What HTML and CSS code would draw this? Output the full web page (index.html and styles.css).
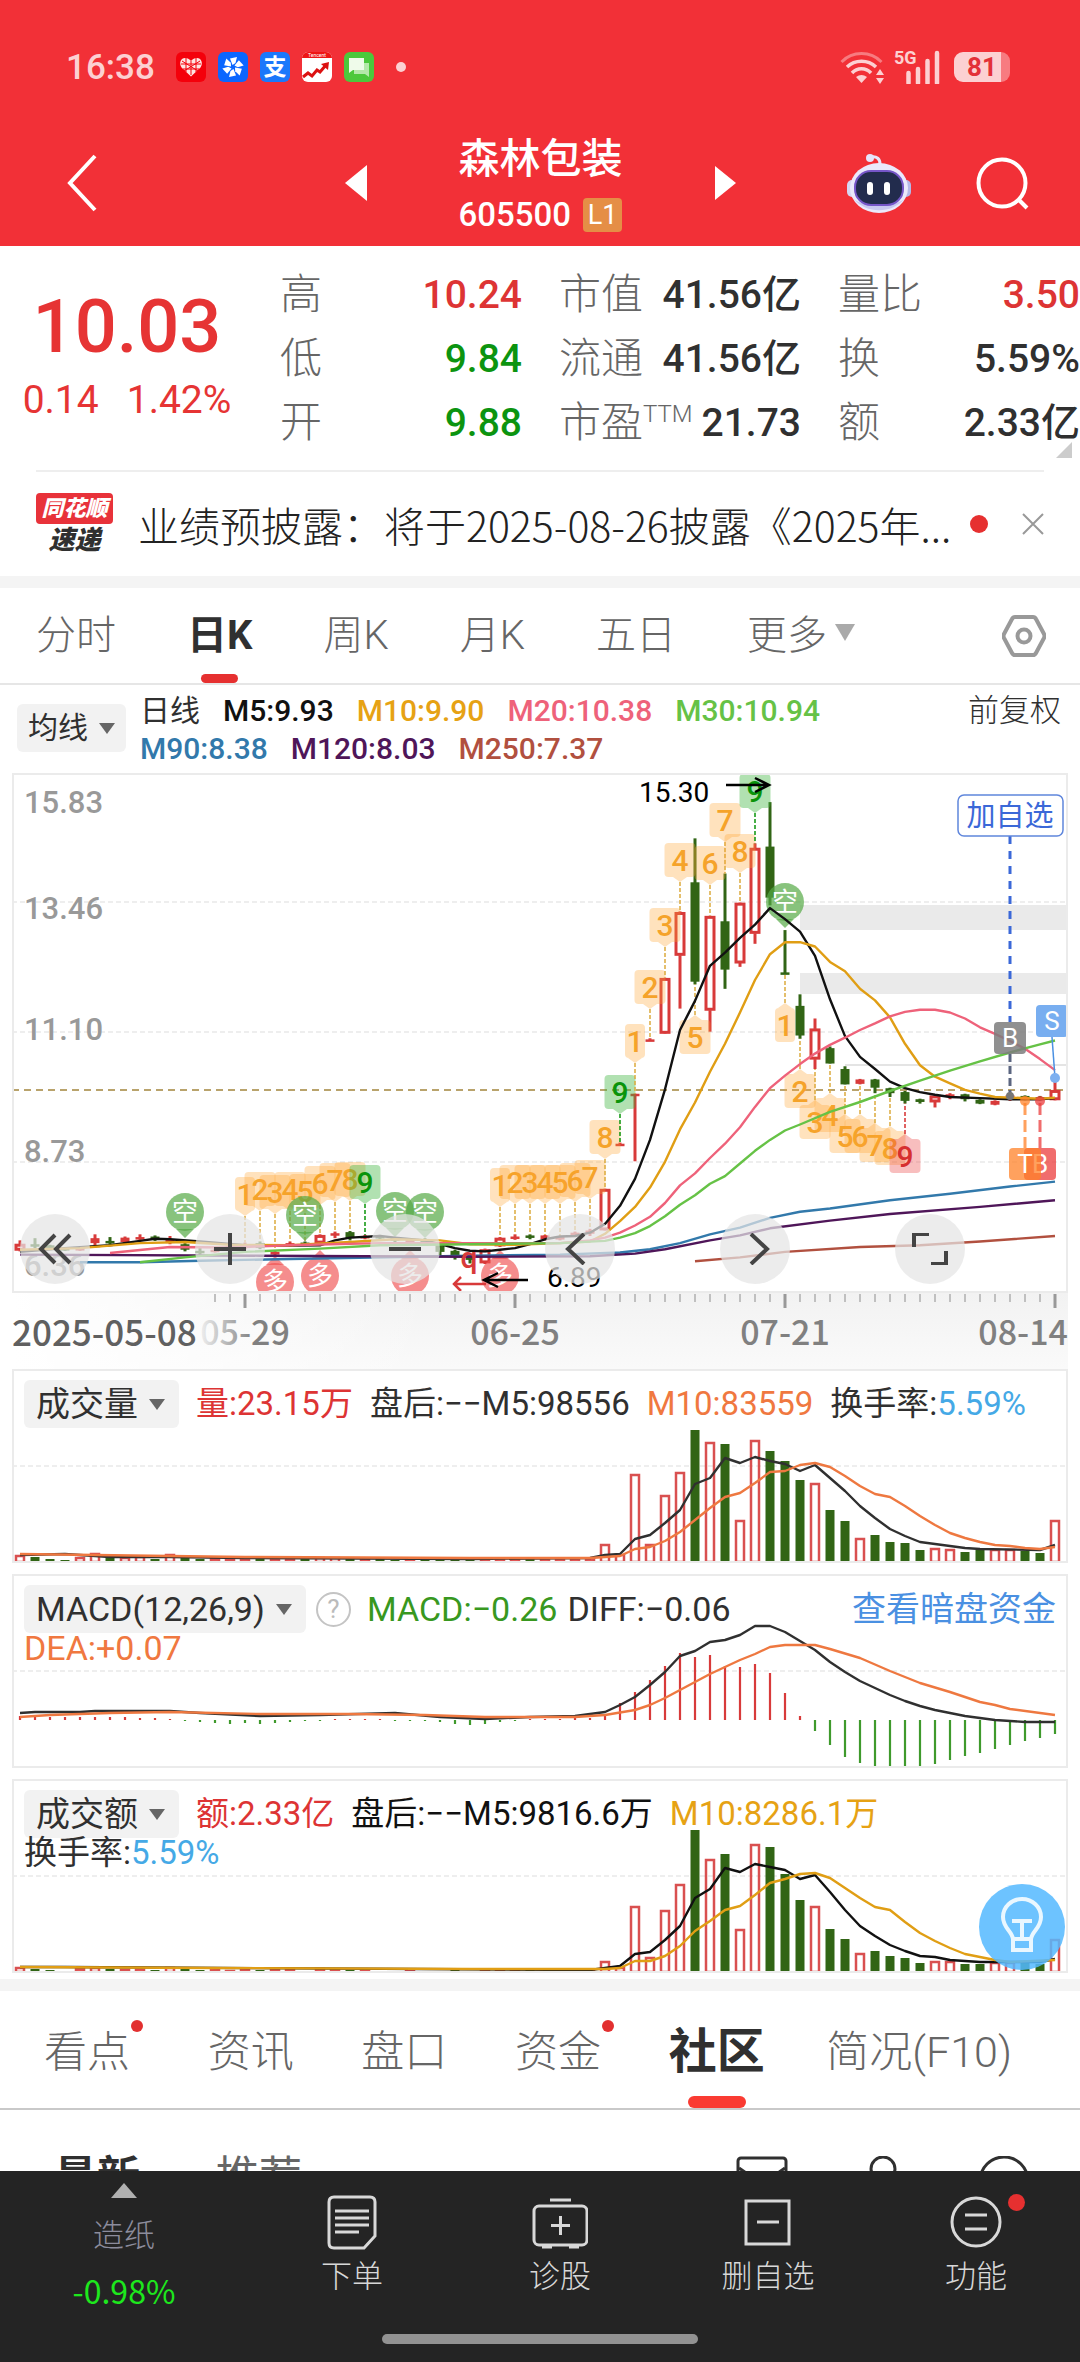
FILE: index.html
```html
<!DOCTYPE html>
<html lang="zh-CN">
<head>
    <meta charset="UTF-8">
    <meta name="viewport" content="width=device-width, initial-scale=1.0">
    <title>森林包装 605500</title>
    <link rel="stylesheet" href="styles.css">
</head>
<body>
    <header class="header">
        <div class="status-bar">
            <span class="clock">16:38</span>
            <div class="status-apps">
                <svg width="30" height="30" viewBox="0 0 30 30"><rect width="30" height="30" rx="6" fill="#f4000b"/><path d="M15 24.500L5.500 15.500C2.500 11 5 6 9 6c3 0 5 1.500 6 3 1-1.500 3-3 6-3 4 0 6.500 5 3.500 9.500z" fill="#fde4e2"/><path d="M5 12h20M7 17h16M10 6v14M15 9v14M20 6v14M6 9l16 10M24 9L8 19" stroke="#f4000b" stroke-width="1"/></svg>
                <svg width="30" height="30" viewBox="0 0 30 30"><rect width="30" height="30" rx="6" fill="#0a66ff"/><g fill="#fff"><path id="blade" d="M14.500 13L12 6.500 19 5l-1.500 6z"/><use href="#blade" transform="rotate(60 15 15)"/><use href="#blade" transform="rotate(120 15 15)"/><use href="#blade" transform="rotate(180 15 15)"/><use href="#blade" transform="rotate(240 15 15)"/><use href="#blade" transform="rotate(300 15 15)"/></g></svg>
                <svg width="30" height="30" viewBox="0 0 30 30"><rect width="30" height="30" rx="6" fill="#1b78fb"/><text x="15" y="23" class="app-glyph">支</text></svg>
                <svg width="30" height="30" viewBox="0 0 30 30"><rect width="30" height="30" rx="6" fill="#fff"/><path d="M0 6a6 6 0 0 1 6-6h18a6 6 0 0 1 6 6z" fill="#ee1515"/><text x="15" y="5" class="app-brand">Tencent</text><path d="M1 25l5-4 4 3 5-6 3 2 6-7" fill="none" stroke="#dc1111" stroke-width="3"/><path d="M19 12l8-2-1 8z" fill="#dc1111"/></svg>
                <svg width="30" height="30" viewBox="0 0 30 30"><rect width="30" height="30" rx="6" fill="#4cc83c"/><path d="M10 11h15v14l-4-3H10z" fill="#b4e8aa"/><path d="M5 6h15v12H9l-4 3z" fill="#effbea"/></svg>
            </div>
            <span class="status-dot"></span>
            <div class="status-right">
                <svg width="44" height="34" viewBox="0 0 44 34" fill="none"><path d="M1.500 12a28 28 0 0 1 40 0" stroke="#f77b80" stroke-width="3"/><path d="M7 17a21 21 0 0 1 29 0M12 23a13 13 0 0 1 19 0" stroke="#fcd0d2" stroke-width="3.500"/><path d="M16 27q5.500-4 11 0l-5.500 6z" fill="#fcd0d2"/><path d="M36 25l4-6 4 6zM36 28h8l-4 6z" fill="#fcd0d2"/></svg>
                <div class="signal">
                    <span>5G</span>
                    <svg width="42" height="34" viewBox="0 0 42 34"><path d="M10.500 33V23M20 33V19M29.500 33V11M39 33V3" stroke="#fcd0d2" stroke-width="4.500" stroke-linecap="round"/></svg>
                </div>
                <span class="battery">81</span>
            </div>
        </div>
        <nav class="nav-bar">
            <button class="icon-btn back" aria-label="返回"><svg width="30" height="58" viewBox="0 0 30 58"><path d="M28 2L3 29l25 27" fill="none" stroke="#fff" stroke-width="4"/></svg></button>
            <div class="stock-switch">
                <button class="icon-btn" aria-label="上一只"><svg width="22" height="36" viewBox="0 0 22 36"><path d="M22 0v36L0 18z" fill="#fff"/></svg></button>
                <div class="stock-name">
                    <h1>森林包装</h1>
                    <p>605500 <span class="level">L1</span></p>
                </div>
                <button class="icon-btn" aria-label="下一只"><svg width="22" height="36" viewBox="0 0 22 36"><path d="M0 1v34l21-17z" fill="#fff"/></svg></button>
            </div>
            <div class="nav-tools">
                <button class="icon-btn" aria-label="智能助手">
                    <svg width="64" height="60" viewBox="0 0 64 60">
                        <path d="M24 4c6-1 9 2 9 7" fill="none" stroke="#e8e6fa" stroke-width="3"/><circle cx="23" cy="5" r="4" fill="#e6e4fb"/>
                        <rect x="0" y="27" width="10" height="17" rx="5" fill="#d5d6f3"/><rect x="54" y="27" width="10" height="17" rx="5" fill="#b5b9e8"/>
                        <ellipse cx="32" cy="35" rx="29" ry="25" fill="#ebe9fb"/><path d="M7 46c12 15 38 15 50 0-8 8-42 8-50 0z" fill="#c9c8f0"/>
                        <rect x="8" y="18" width="48" height="34" rx="16" fill="#222c4d" stroke="#7656c8" stroke-width="2"/>
                        <rect x="20" y="29" width="6" height="13" rx="3" fill="#fff"/><rect x="37" y="29" width="6" height="13" rx="3" fill="#fff"/>
                    </svg>
                </button>
                <button class="icon-btn" aria-label="搜索"><svg width="54" height="54" viewBox="0 0 54 54" fill="none" stroke="#fff" stroke-width="4"><circle cx="26" cy="27" r="23.500"/><path d="M42 43l9 9"/></svg></button>
            </div>
        </nav>
    </header>

    <main>
        <section class="quote">
            <div class="price">
                <strong>10.03</strong>
                <p><span>0.14</span><span>1.42%</span></p>
            </div>
            <dl class="stats">
                <div><dt>高</dt><dd class="up">10.24</dd></div>
                <div><dt>市值</dt><dd>41.56亿</dd></div>
                <div><dt>量比</dt><dd class="up">3.50</dd></div>
                <div><dt>低</dt><dd class="down">9.84</dd></div>
                <div><dt>流通</dt><dd>41.56亿</dd></div>
                <div><dt>换</dt><dd>5.59%</dd></div>
                <div><dt>开</dt><dd class="down">9.88</dd></div>
                <div><dt>市盈<sup>TTM</sup></dt><dd>21.73</dd></div>
                <div><dt>额</dt><dd>2.33亿</dd></div>
            </dl>
            <span class="corner"></span>
        </section>

        <section class="news">
            <div class="news-logo"><b>同花顺</b><i>速递</i></div>
            <a href="#">业绩预披露：将于2025-08-26披露《2025年...</a>
            <span class="news-dot"></span>
            <button class="icon-btn" aria-label="关闭"><svg width="22" height="22" viewBox="0 0 22 22"><path d="M1 1l20 20M21 1L1 21" stroke="#999" stroke-width="2"/></svg></button>
        </section>

        <nav class="period-tabs">
            <a href="#">分时</a>
            <a href="#" class="active">日K</a>
            <a href="#">周K</a>
            <a href="#">月K</a>
            <a href="#">五日</a>
            <a href="#" class="more">更多</a>
            <button class="icon-btn" aria-label="设置"><svg width="44" height="44" viewBox="0 0 44 44" fill="none" stroke="#999" stroke-width="4"><path d="M13 3h18q2 0 3 2l8 15q1 2 0 4l-8 15q-1 2-3 2H13q-2 0-3-2L2 24q-1-2 0-4l8-15q1-2 3-2z"/><circle cx="22" cy="22" r="6.500"/></svg></button>
        </nav>

        <div class="ma-legend">
            <label class="picker"><select aria-label="均线"><option>均线</option></select></label>
            <div class="ma-values">
                <p><span>日线</span><span class="m5">M5:9.93</span><span class="m10">M10:9.90</span><span class="m20">M20:10.38</span><span class="m30">M30:10.94</span></p>
                <p><span class="m90">M90:8.38</span><span class="m120">M120:8.03</span><span class="m250">M250:7.37</span></p>
            </div>
            <a href="#" class="adjust">前复权</a>
        </div>

        <div class="charts">
            <div class="panel">
                <svg id="kline" viewBox="0 0 1056 520"></svg>
                <div class="chart-tools">
                    <button aria-label="最早"><svg width="36" height="32" viewBox="0 0 36 32"><path d="M18 2L4 16l14 14M33 2L19 16l14 14"/></svg></button>
                    <button aria-label="放大"><svg width="36" height="32" viewBox="0 0 36 32"><path d="M18 0v32M2 16h32"/></svg></button>
                    <button aria-label="缩小"><svg width="36" height="32" viewBox="0 0 36 32"><path d="M2 16h32"/></svg></button>
                    <button aria-label="左移"><svg width="36" height="32" viewBox="0 0 36 32"><path d="M22 1L6 16l16 15"/></svg></button>
                    <button aria-label="右移"><svg width="36" height="32" viewBox="0 0 36 32"><path d="M14 1l16 15-16 15"/></svg></button>
                    <button aria-label="全屏"><svg width="36" height="32" viewBox="0 0 36 32"><path d="M17 1H2v13M19 31h15V18"/></svg></button>
                </div>
            </div>
            <svg id="axis" class="axis" viewBox="0 0 1056 76">
                <defs><linearGradient id="fade"><stop offset="0" stop-color="#808080" stop-opacity="0.1"/><stop offset="0.6" stop-color="#808080"/></linearGradient></defs>
            </svg>

            <div class="panel">
                <div class="legend">
                    <label class="picker"><select aria-label="副图一"><option>成交量</option></select></label>
                    <span class="up">量:23.15万</span>
                    <span>盘后:−−M5:98556</span>
                    <span class="avg">M10:83559</span>
                    <span>换手率:<em>5.59%</em></span>
                </div>
                <svg id="volume" viewBox="0 0 1056 194"></svg>
            </div>

            <div class="panel">
                <div class="legend tight">
                    <label class="picker"><select aria-label="副图二"><option>MACD(12,26,9)</option></select></label>
                    <button class="help" aria-label="说明">?</button>
                    <span class="macd">MACD:−0.26</span>
                    <span>DIFF:−0.06</span>
                    <a href="#">查看暗盘资金</a>
                    <span class="avg row">DEA:+0.07</span>
                </div>
                <svg id="macd" viewBox="0 0 1056 194"></svg>
            </div>

            <div class="panel">
                <div class="legend">
                    <label class="picker"><select aria-label="副图三"><option>成交额</option></select></label>
                    <span class="up">额:2.33亿</span>
                    <span class="m5">盘后:−−M5:9816.6万</span>
                    <span class="m10">M10:8286.1万</span>
                    <span class="row">换手率:<em>5.59%</em></span>
                </div>
                <svg id="amount" viewBox="0 0 1056 194"></svg>
                <button class="bulb" aria-label="提示"><svg width="44" height="60" viewBox="0 0 44 60" fill="none" stroke="#eaf7ff" stroke-width="4"><path d="M13 42C12 34 3 31 3 20a19 18 0 0 1 38 0c0 11-9 14-10 22z"/><path d="M12 24h20M22 24v18M13 42v11h18V42"/></svg></button>
            </div>
        </div>

        <nav class="section-tabs">
            <a href="#" class="new">看点</a>
            <a href="#">资讯</a>
            <a href="#">盘口</a>
            <a href="#" class="new">资金</a>
            <a href="#" class="active">社区</a>
            <a href="#">简况(F10)</a>
        </nav>

        <div class="feed-head">
            <a href="#" class="active">最新</a>
            <a href="#">推荐</a>
            <div class="feed-tools">
                <svg width="52" height="44" viewBox="0 0 52 44"><rect x="2" y="2" width="48" height="38" rx="3"/><path d="M3 12l23 16 23-16"/></svg>
                <svg width="52" height="52" viewBox="0 0 52 52"><circle cx="26" cy="13" r="12"/><path d="M4 50c2-28 42-28 44 0"/></svg>
                <svg width="52" height="52" viewBox="0 0 52 52"><circle cx="26" cy="25" r="24"/></svg>
            </div>
        </div>
    </main>

    <footer class="bottom-bar">
        <a href="#" class="sector"><i></i><span>造纸</span><b>-0.98%</b></a>
        <a href="#"><svg width="56" height="56" viewBox="0 0 56 56"><path d="M10 3h36q5 0 5 5v34L40 54H10q-5 0-5-5V8q0-5 5-5z"/><path d="M11 17h34M11 24h34M11 31h34M11 38h24"/></svg>下单</a>
        <a href="#"><svg width="56" height="56" viewBox="0 0 56 56"><rect x="2" y="12" width="53" height="39" rx="5"/><path d="M18 6h21M28.500 22v19M19 31.500h19M10 53h10M37 53h10"/></svg>诊股</a>
        <a href="#"><svg width="56" height="56" viewBox="0 0 56 56"><rect x="6" y="7" width="43" height="43"/><path d="M17 28h22"/></svg>删自选</a>
        <a href="#" class="new"><svg width="56" height="56" viewBox="0 0 56 56"><circle cx="28" cy="28" r="24"/><path d="M17 21h22M17 35h22"/></svg>功能</a>
        <span class="home-pill"></span>
    </footer>
    <script src="chart.js"></script>
</body>
</html>
```
FILE: styles.css
```css
* {
    box-sizing: border-box;
}
body {
    margin: 0;
    min-height: 100vh;
    background: #fff;
    color: #303030;
    font-family: Roboto, "Noto Sans CJK SC", sans-serif;
    overflow-x: hidden;
    padding-bottom: 140px;
}
h1, p, dl, dd {
    margin: 0;
}
a {
    color: inherit;
    text-decoration: none;
}
button, select {
    font: inherit;
    color: inherit;
    border: none;
    padding: 0;
}
svg {
    display: block;
}
.icon-btn {
    background: none;
    line-height: 0;
    cursor: pointer;
}
.up {
    color: #dd3434;
}
.down {
    color: #0c9410;
}

/* Header */
.header {
    background: #f23037;
    color: #fff;
}
.status-bar {
    display: flex;
    align-items: center;
    height: 134px;
    padding: 0 70px 0 66px;
    color: #fcd0d2;
}
.clock {
    font-size: 35px;
    font-weight: 500;
}
.status-apps {
    display: flex;
    gap: 12px;
    margin-left: 21px;
}
.app-glyph {
    font-size: 23px;
    font-weight: 700;
    fill: #fff;
    text-anchor: middle;
}
.app-brand {
    font-size: 5px;
    fill: #fff;
    text-anchor: middle;
}
.status-dot {
    width: 10px;
    height: 10px;
    border-radius: 50%;
    background: #fcd0d2;
    margin-left: 22px;
}
.status-right {
    display: flex;
    align-items: center;
    gap: 14px;
    margin-left: auto;
}
.signal {
    position: relative;
}
.signal span {
    position: absolute;
    left: -4px;
    top: -1px;
    font-size: 18px;
    font-weight: 700;
    line-height: 18px;
}
.battery {
    width: 56px;
    height: 30px;
    border-radius: 9px;
    background: linear-gradient(90deg, #fcd0d2 47px, #f77b80 47px);
    color: #e33038;
    font-size: 26px;
    font-weight: 700;
    line-height: 30px;
    text-align: center;
}
.nav-bar {
    display: grid;
    grid-template-columns: 1fr 392px 1fr;
    align-items: center;
    height: 112px;
    padding: 0 50px 14px 67px;
}
.back {
    justify-self: start;
}
.stock-switch {
    display: flex;
    justify-content: space-between;
    align-items: center;
    margin: 0 8px 0 -8px;
}
.stock-name {
    text-align: center;
}
.stock-name h1 {
    font-size: 41px;
    font-weight: 500;
    line-height: 50px;
}
.stock-name p {
    display: flex;
    gap: 12px;
    margin-top: 14px;
    font-size: 33px;
    font-weight: 500;
    line-height: 34px;
}
.level {
    width: 39px;
    background: #e58e46;
    border-radius: 4px;
    font-size: 27px;
    font-weight: 400;
}
.nav-tools {
    display: flex;
    justify-content: flex-end;
    align-items: center;
    gap: 65px;
}

/* Quote */
.quote {
    display: flex;
    position: relative;
    height: 226px;
    padding-top: 17px;
}
.quote::after {
    content: "";
    position: absolute;
    left: 36px;
    right: 36px;
    bottom: 0;
    height: 2px;
    background: #eee;
}
.price {
    width: 254px;
    margin-right: 26px;
    padding-top: 18px;
    text-align: center;
    color: #e63434;
}
.price strong {
    display: block;
    font-size: 74px;
    font-weight: 500;
    line-height: 92px;
}
.price p {
    display: flex;
    justify-content: center;
    gap: 28px;
    font-size: 39px;
    line-height: 54px;
}
.stats {
    flex: 1;
    display: grid;
    grid-template-columns: repeat(3, 1fr);
    column-gap: 37px;
    grid-auto-rows: 64px;
}
.stats div {
    display: flex;
    justify-content: space-between;
    line-height: 64px;
    white-space: nowrap;
}
.stats dt {
    color: #666;
    font-size: 42px;
    font-weight: 300;
}
.stats sup {
    font-size: 24px;
    line-height: 0;
}
.stats dd {
    font-size: 39px;
    font-weight: 500;
}
.corner {
    position: absolute;
    right: 8px;
    bottom: 14px;
    border-left: 16px solid transparent;
    border-bottom: 16px solid #ccc;
}

/* News strip */
.news {
    display: flex;
    align-items: center;
    height: 104px;
    padding: 0 36px;
}
.news-logo {
    width: 77px;
    margin-right: 25px;
    font-style: italic;
    font-weight: 900;
    text-align: center;
}
.news-logo b {
    display: block;
    background: #e8323a;
    border-radius: 4px;
    color: #fff;
    font-size: 22px;
    line-height: 31px;
}
.news-logo i {
    display: block;
    font-size: 26px;
    line-height: 32px;
}
.news a {
    flex: 1;
    font-family: "Noto Sans CJK SC", sans-serif;
    font-size: 41px;
    font-weight: 300;
    line-height: 60px;
    white-space: nowrap;
    color: #222;
}
.news-dot {
    width: 18px;
    height: 18px;
    border-radius: 50%;
    background: #e63030;
    margin-right: 34px;
}

/* Period tabs */
.period-tabs {
    display: flex;
    align-items: center;
    gap: 71px;
    height: 109px;
    padding: 0 34px 0 36px;
    border-top: 12px solid #f4f4f4;
    border-bottom: 2px solid #e6e6e6;
    font-size: 40px;
    font-weight: 300;
    line-height: 95px;
    color: #666;
}
.period-tabs a {
    position: relative;
    white-space: nowrap;
}
.period-tabs .active {
    color: #303030;
    font-weight: 700;
}
.period-tabs .active::after {
    content: "";
    position: absolute;
    left: 14px;
    right: 14px;
    bottom: 0;
    height: 9px;
    border-radius: 5px;
    background: #e63030;
}
.more::after {
    content: "";
    display: inline-block;
    margin-left: 8px;
    vertical-align: 8px;
    border: 10px solid transparent;
    border-top: 17px solid #aaa;
    border-bottom: none;
}
.period-tabs button {
    margin-left: auto;
}

/* Indicator picker */
.picker {
    display: inline-flex;
    align-items: center;
    height: 48px;
    padding: 0 14px 0 12px;
    border-radius: 6px;
    background: #f2f2f2;
    color: #303030;
}
.picker select {
    appearance: none;
    background: none;
    cursor: pointer;
}
.picker::after {
    content: "";
    margin-left: 11px;
    border: 8px solid transparent;
    border-top: 11px solid #666;
    border-bottom: none;
}

/* MA legend */
.ma-legend {
    display: flex;
    height: 88px;
    padding: 7px 19px 0 17px;
    font-size: 30px;
    line-height: 38px;
}
.ma-legend .picker {
    margin-top: 12px;
    padding: 0 11px;
    flex: none;
}
.ma-values {
    flex: 1;
    margin-left: 14px;
    font-weight: 500;
}
.ma-values p {
    display: flex;
    gap: 23px;
    white-space: nowrap;
}
.ma-values p span:first-child {
    font-weight: 400;
}
.ma-values p .m90:first-child {
    font-weight: 500;
}
.adjust {
    font-size: 31px;
    font-weight: 300;
}
.m5 { color: #111; }
.m10 { color: #e6a214; }
.m20 { color: #ee627a; }
.m30 { color: #66c246; }
.m90 { color: #3279ab; }
.m120 { color: #4f1659; }
.m250 { color: #b1503f; }

/* Charts */
.charts {
    padding: 0 12px 6px;
}
.panel {
    position: relative;
    margin-bottom: 11px;
    outline: 2px solid #ebebeb;
    outline-offset: -2px;
}
.panel:first-child, .panel:last-child {
    margin-bottom: 0;
}
.panel > svg, .axis {
    width: 100%;
    height: auto;
}
.axis {
    background: linear-gradient(90deg, #fff, transparent 40%), linear-gradient(#f2f2f2, #fafafa);
}
.grid {
    stroke: #ddd;
    stroke-width: 1;
    stroke-dasharray: 5 3;
}
.now {
    stroke: #b9a36c;
    stroke-width: 2;
    stroke-dasharray: 7 5;
}
.scale {
    font-size: 31px;
    font-weight: 500;
    fill: #999;
}
.date {
    font-size: 34px;
    font-weight: 500;
    fill: #808080;
    font-family: "Noto Sans CJK SC", sans-serif;
}
.date.first {
    font-size: 35px;
    fill: #606060;
}
.date.faded {
    fill: url(#fade);
}
.extreme {
    font-size: 28px;
    fill: #000;
}
.pin {
    font-size: 30px;
    font-weight: 500;
    text-anchor: middle;
}
.flag {
    font-size: 26px;
    fill: #fff;
    text-anchor: middle;
}
.watch {
    font-size: 29px;
    fill: #3b68d8;
    text-anchor: middle;
}
.chart-tools {
    position: absolute;
    left: 8px;
    right: 103px;
    bottom: 9px;
    display: flex;
    justify-content: space-between;
}
.chart-tools button {
    display: flex;
    justify-content: center;
    align-items: center;
    width: 70px;
    height: 70px;
    border-radius: 50%;
    background: rgba(228, 228, 228, 0.72);
    cursor: pointer;
}
.chart-tools path {
    fill: none;
    stroke: #444;
    stroke-width: 4;
}
.legend {
    position: absolute;
    left: 12px;
    right: 12px;
    top: 11px;
    display: flex;
    flex-wrap: wrap;
    align-items: center;
    column-gap: 17px;
    font-size: 33px;
    line-height: 48px;
    white-space: nowrap;
    z-index: 1;
}
.legend .picker {
    font-size: 34px;
}
.legend.tight {
    column-gap: 10px;
    font-size: 34px;
}
.legend .avg {
    color: #f07840;
}
.legend .macd {
    color: #38981f;
}
.legend em {
    font-style: normal;
    color: #45a9e6;
}
.legend a {
    margin-left: auto;
    color: #4a90e2;
}
.legend .row {
    flex-basis: 100%;
    line-height: 30px;
}
.help {
    width: 35px;
    height: 35px;
    margin-right: 6px;
    border: 2px solid #c4c4c4;
    border-radius: 50%;
    background: none;
    color: #bbb;
    font-size: 26px;
    line-height: 30px;
}
.bulb {
    position: absolute;
    right: 3px;
    bottom: 3px;
    width: 86px;
    height: 86px;
    border-radius: 50%;
    background: rgba(84, 184, 255, 0.85);
    display: flex;
    justify-content: center;
    align-items: center;
    z-index: 1;
}

/* Section tabs */
.section-tabs {
    display: flex;
    justify-content: space-between;
    height: 131px;
    padding: 0 68px 0 44px;
    border-top: 12px solid #f4f4f4;
    border-bottom: 2px solid #c9c9c9;
    font-size: 43px;
    font-weight: 300;
    line-height: 122px;
    color: #666;
}
.section-tabs a {
    position: relative;
    height: 117px;
    white-space: nowrap;
}
.section-tabs a:first-child {
    margin-right: 10px;
}
.section-tabs .active {
    margin-right: -6px;
    color: #303030;
    font-size: 48px;
    font-weight: 700;
}
.section-tabs .active::after {
    content: "";
    position: absolute;
    left: 19px;
    right: 19px;
    bottom: 0;
    height: 12px;
    border-radius: 6px;
    background: #fa3b32;
}
.section-tabs .new::after {
    content: "";
    position: absolute;
    right: -13px;
    top: 29px;
    width: 12px;
    height: 12px;
    border-radius: 50%;
    background: #e23030;
}
.feed-head {
    display: flex;
    gap: 76px;
    padding: 37px 50px 0 54px;
    font-size: 43px;
    line-height: 60px;
    color: #666;
}
.feed-head .active {
    color: #303030;
    font-weight: 700;
}
.feed-tools {
    display: flex;
    gap: 69px;
    margin-left: auto;
    padding-top: 9px;
}
.feed-tools svg {
    fill: none;
    stroke: #303030;
    stroke-width: 3;
}

/* Bottom bar */
.bottom-bar {
    position: fixed;
    left: 0;
    right: 0;
    bottom: 0;
    display: grid;
    grid-template-columns: 248px repeat(4, 1fr);
    height: 191px;
    background: #242424;
    color: #d8d8d8;
    font-size: 31px;
    font-weight: 300;
    z-index: 2;
}
.bottom-bar a {
    position: relative;
    display: flex;
    flex-direction: column;
    align-items: center;
    padding-top: 23px;
    line-height: 54px;
}
.bottom-bar svg {
    fill: none;
    stroke: #d8d8d8;
    stroke-width: 3;
}
.bottom-bar .new::after {
    content: "";
    position: absolute;
    left: calc(50% + 32px);
    top: 23px;
    width: 17px;
    height: 17px;
    border-radius: 50%;
    background: #e63030;
}
.bottom-bar .sector {
    padding-top: 12px;
    color: #8c8c9c;
}
.sector i {
    border: 13px solid transparent;
    border-top: none;
    border-bottom: 15px solid #b0b0b0;
}
.sector span {
    margin-top: 11px;
}
.sector b {
    font-family: "Noto Sans CJK SC", sans-serif;
    font-size: 32px;
    font-weight: 400;
    color: #1de81d;
}
.home-pill {
    position: absolute;
    left: 50%;
    bottom: 18px;
    width: 316px;
    height: 10px;
    margin-left: -158px;
    border-radius: 5px;
    background: #929292;
}
```
FILE: chart.js
```js
const RED = '#d83a3a', GREEN = '#316515';
const NS = 'http://www.w3.org/2000/svg';

const x = i => 8 + 15 * i;
const y = p => (15.83 - p) * 54.92;

function add(svg, tag, attrs, text) {
    const el = document.createElementNS(NS, tag);
    for (const k in attrs) el.setAttribute(k, attrs[k]);
    if (text !== undefined) el.textContent = text;
    svg.appendChild(el);
    return el;
}

function vline(svg, cx, y1, y2, stroke, width, dash) {
    add(svg, 'line', { x1: cx, x2: cx, y1, y2, stroke, 'stroke-width': width, 'stroke-dasharray': dash || 'none' });
}

function hline(svg, cls, cy) {
    add(svg, 'line', { class: cls, x1: 0, x2: 1056, y1: cy, y2: cy });
}

// knots: flat list of index, value, index, value ...
function curve(svg, color, knots, scale) {
    const pts = [];
    for (let k = 0; k < knots.length; k += 2) pts.push(x(knots[k]) + ',' + scale(knots[k + 1]).toFixed(1));
    add(svg, 'polyline', { points: pts.join(' '), fill: 'none', stroke: color, 'stroke-width': 2.4, 'stroke-linejoin': 'round' });
}

/* ---------- daily candles: open, close, high, low ---------- */
const candles = [
    [7.14, 7.25, 7.32, 7.12], [7.25, 7.23, 7.36, 7.18], [7.23, 7.18, 7.24, 7.16], [7.18, 7.15, 7.20, 7.13], [7.15, 7.18, 7.20, 7.13],
    [7.27, 7.36, 7.43, 7.22], [7.31, 7.29, 7.38, 7.24], [7.29, 7.37, 7.39, 7.27], [7.35, 7.38, 7.43, 7.33], [7.39, 7.33, 7.41, 7.31],
    [7.27, 7.34, 7.40, 7.25], [7.25, 7.15, 7.27, 7.12], [7.13, 7.11, 7.18, 7.06], [7.12, 7.15, 7.17, 7.10], [7.15, 7.22, 7.24, 7.13],
    [7.18, 7.25, 7.28, 7.16], [7.27, 7.18, 7.30, 7.16], [7.06, 7.11, 7.13, 7.04], [7.23, 7.27, 7.30, 7.20], [7.28, 7.27, 7.30, 7.22],
    [7.27, 7.41, 7.43, 7.25], [7.41, 7.45, 7.48, 7.36], [7.47, 7.36, 7.49, 7.32], [7.36, 7.40, 7.42, 7.34], [7.40, 7.36, 7.42, 7.33],
    [7.36, 7.32, 7.38, 7.28], [7.31, 7.33, 7.35, 7.28], [7.34, 7.27, 7.36, 7.25], [7.25, 7.11, 7.26, 7.04], [7.13, 7.03, 7.15, 6.97],
    [7.01, 6.98, 7.03, 6.90], [6.91, 7.15, 7.17, 6.89], [7.22, 7.36, 7.38, 7.20], [7.36, 7.39, 7.43, 7.33], [7.41, 7.37, 7.43, 7.34],
    [7.34, 7.41, 7.42, 7.32], [7.36, 7.38, 7.40, 7.32], [7.42, 7.46, 7.48, 7.38], [7.44, 7.50, 7.53, 7.40], [7.51, 8.25, 8.26, 7.50],
    [9.08, 9.08, 9.10, 9.06], [9.99, 9.99, 9.99, 8.76], [10.98, 10.98, 11.00, 10.97], [11.09, 12.09, 12.10, 11.08], [12.51, 13.29, 13.31, 11.54],
    [13.84, 12.03, 14.64, 11.98], [11.51, 13.22, 13.23, 11.12], [13.13, 12.25, 14.00, 11.90], [12.37, 13.46, 13.47, 12.30], [12.91, 14.46, 14.55, 12.72],
    [14.49, 13.56, 15.30, 13.42], [12.20, 12.18, 12.97, 12.18], [11.59, 11.05, 11.80, 10.99], [10.62, 11.17, 11.36, 10.44], [10.82, 10.54, 10.85, 10.54],
    [10.44, 10.16, 10.49, 10.16], [10.17, 10.25, 10.26, 10.16], [10.25, 10.10, 10.26, 10.00], [10.09, 10.00, 10.10, 9.93], [10.02, 9.86, 10.04, 9.81],
    [9.89, 9.84, 9.90, 9.81], [9.84, 9.95, 9.96, 9.74], [9.93, 9.98, 10.00, 9.89], [9.98, 9.89, 9.99, 9.85], [9.88, 9.81, 9.89, 9.80],
    [9.79, 9.86, 9.87, 9.78], [9.88, 9.96, 10.00, 9.86], [9.95, 9.88, 9.96, 9.87], [9.93, 9.88, 9.95, 9.87], [9.88, 10.05, 10.23, 9.87]
];
const rising = candles.map(c => c[1] >= c[0]);

const averages = {
    '#b1503f': [45, 6.94, 48, 7.01, 51, 7.11, 56, 7.20, 60, 7.23, 64, 7.30, 69, 7.40],
    '#3279ab': [4, 6.92, 8, 6.92, 12, 6.95, 18, 6.98, 30, 7.04, 36, 7.06, 40, 7.10, 42, 7.16, 44, 7.27, 46, 7.43, 48, 7.55, 50, 7.73, 52, 7.84, 54, 7.90, 58, 8.05, 62, 8.17, 66, 8.30, 69, 8.39],
    '#4f1659': [0, 7.06, 16, 7.04, 30, 7.02, 38, 7.03, 41, 7.08, 43, 7.16, 46, 7.32, 48, 7.41, 50, 7.54, 54, 7.68, 58, 7.80, 64, 7.93, 69, 8.05],
    '#111': [0, 7.11, 3, 7.18, 6, 7.23, 8, 7.31, 9, 7.35, 10, 7.34, 12, 7.30, 15, 7.23, 17, 7.22, 20, 7.23, 21, 7.32, 22, 7.37, 24, 7.40, 25, 7.37, 27, 7.32, 28, 7.25, 29, 7.18, 30, 7.13, 31, 7.12, 32, 7.15, 33, 7.18, 34, 7.25, 35, 7.34, 36, 7.39, 37, 7.40, 38, 7.46, 39, 7.62, 40, 7.95, 41, 8.44, 42, 9.15, 43, 10.07, 44, 11.15, 45, 11.68, 46, 12.32, 47, 12.56, 48, 12.83, 49, 13.07, 50, 13.37, 51, 13.17, 52, 12.94, 53, 12.50, 54, 11.71, 55, 11.04, 56, 10.66, 57, 10.44, 58, 10.21, 59, 10.09, 60, 10.02, 61, 9.97, 62, 9.93, 64, 9.91, 66, 9.89, 68, 9.89, 69, 9.91],
    '#e09e14': [0, 7.15, 4, 7.18, 8, 7.27, 11, 7.29, 14, 7.24, 18, 7.23, 22, 7.29, 25, 7.34, 28, 7.32, 30, 7.25, 33, 7.24, 36, 7.27, 38, 7.30, 39, 7.44, 40, 7.67, 41, 7.93, 42, 8.28, 43, 8.75, 44, 9.34, 45, 9.83, 46, 10.39, 47, 10.90, 48, 11.47, 49, 12.06, 50, 12.53, 51, 12.75, 52, 12.75, 53, 12.67, 54, 12.39, 55, 12.22, 56, 11.90, 57, 11.69, 58, 11.38, 59, 10.90, 60, 10.51, 61, 10.30, 62, 10.18, 63, 10.06, 64, 9.99, 65, 9.93, 66, 9.92, 68, 9.90, 69, 9.92],
    '#ee627a': [6, 7.09, 10, 7.20, 14, 7.19, 18, 7.23, 24, 7.27, 36, 7.27, 38, 7.32, 39, 7.37, 40, 7.46, 41, 7.59, 42, 7.75, 43, 8.00, 44, 8.32, 45, 8.54, 46, 8.82, 47, 9.08, 48, 9.38, 49, 9.75, 50, 10.09, 51, 10.32, 52, 10.53, 53, 10.72, 54, 10.88, 55, 11.01, 56, 11.15, 57, 11.27, 58, 11.40, 59, 11.48, 60, 11.52, 61, 11.52, 62, 11.47, 63, 11.36, 64, 11.20, 65, 11.08, 66, 10.95, 67, 10.81, 68, 10.62, 69, 10.42],
    '#66c246': [8, 6.92, 11, 7.01, 15, 7.11, 20, 7.17, 24, 7.23, 30, 7.25, 36, 7.27, 39, 7.31, 40, 7.37, 41, 7.45, 42, 7.58, 43, 7.76, 44, 7.97, 45, 8.14, 46, 8.35, 47, 8.49, 48, 8.72, 49, 8.95, 50, 9.15, 51, 9.32, 52, 9.43, 54, 9.66, 56, 9.84, 58, 10.04, 60, 10.23, 62, 10.41, 64, 10.58, 66, 10.74, 68, 10.89, 69, 10.96]
};

/* numbered pins: index, label, centre y */
const pinsAbove = [
    [15, 1, 421], [16, 2, 416], [17, 3, 419], [18, 4, 416], [19, 5, 418], [20, 6, 410], [21, 7, 407], [22, 8, 406], [23, 9, 409],
    [32, 1, 412], [33, 2, 409], [34, 3, 409], [35, 4, 409], [36, 5, 409], [37, 6, 407], [38, 7, 404],
    [39, 8, 364], [40, 9, 319], [41, 1, 268], [42, 2, 214], [43, 3, 152], [44, 4, 87], [46, 6, 90], [47, 7, 47], [48, 8, 78], [49, 9, 18]
];
const pinsBelow = [[45, 5, 264], [51, 1, 252], [52, 2, 318], [53, 3, 349], [54, 4, 342], [55, 5, 363], [56, 6, 363], [57, 7, 372], [58, 8, 375], [59, 9, 383]];

function pin(svg, i, label, cy, below) {
    const cx = x(i), w = label === 1 ? 20 : 31;
    let color = '#f5a32a', fill = 'rgba(255,165,50,.32)';
    if (label === 9) {
        color = below ? '#d62f2f' : '#0a940a';
        fill = below ? 'rgba(235,70,70,.35)' : 'rgba(60,180,60,.4)';
    }
    const dir = below ? -1 : 1;
    const c = candles[i];
    vline(svg, cx, cy + dir * 22, y(below ? c[3] : c[2]), label === 9 ? color : '#dcab3e', 1.5, '4 2');
    const left = cx - w / 2;
    add(svg, 'rect', { x: left, y: cy - 17, width: w, height: 34, rx: 4, fill });
    add(svg, 'path', { d: `M${cx - 7} ${cy + dir * 17}h14l-7 ${dir * 5}z`, fill });
    add(svg, 'text', { class: 'pin', x: cx, y: cy, dy: '.36em', fill: color }, label);
}

function badge(svg, cx, cy, text, fill, dir) {
    add(svg, 'circle', { cx, cy, r: 19, fill });
    add(svg, 'path', { d: `M${cx - 9} ${cy + dir * 17}h18l-9 ${dir * 9}z`, fill });
    add(svg, 'text', { class: 'flag', x: cx, y: cy, dy: '.36em' }, text);
}

function flag(svg, cx, top, text, fill) {
    add(svg, 'rect', { x: cx - 16, y: top, width: 32, height: 32, rx: 4, fill });
    add(svg, 'text', { class: 'flag', x: cx, y: top + 16, dy: '.36em' }, text);
}

function arrow(svg, from, to, cy, color, head) {
    const back = to > from ? -head : head;
    add(svg, 'path', { d: `M${from} ${cy}H${to}M${to + back} ${cy - 7}L${to} ${cy}l${back} 7`, fill: 'none', stroke: color, 'stroke-width': 2.5 });
}

function drawKline() {
    const svg = document.getElementById('kline');
    [129, 259, 389].forEach(gy => hline(svg, 'grid', gy));
    add(svg, 'rect', { x: 788, y: 132, width: 268, height: 25, fill: '#eaeaea' });
    add(svg, 'rect', { x: 788, y: 200, width: 268, height: 21, fill: '#eaeaea' });
    add(svg, 'rect', { x: 833, y: 291, width: 223, height: 2, fill: '#e4e4e4' });
    [['15.83', 29], ['13.46', 135], ['11.10', 256], ['8.73', 378], ['6.36', 492]].forEach(([t, cy]) =>
        add(svg, 'text', { class: 'scale', x: 12, y: cy, dy: '.36em' }, t));
    hline(svg, 'now', 317);

    candles.forEach(([open, close, high, low], i) => {
        const color = rising[i] ? RED : GREEN;
        const top = y(Math.max(open, close)), h = Math.max(y(Math.min(open, close)) - top, 2.5);
        if (rising[i] && h > 5) {
            vline(svg, x(i), y(high), top, color, 3);
            vline(svg, x(i), top + h, y(low), color, 3);
            add(svg, 'rect', { x: x(i) - 4, y: top + 1, width: 8, height: h - 2, fill: 'none', stroke: color, 'stroke-width': 3 });
        } else {
            vline(svg, x(i), y(high), y(low), color, 3);
            add(svg, 'rect', { x: x(i) - 4.5, y: top, width: 9, height: h, fill: color });
        }
    });

    pinsAbove.forEach(p => pin(svg, ...p, false));
    pinsBelow.forEach(p => pin(svg, ...p, true));
    [[11, 439], [19, 442], [25, 438], [27, 439], [51, 129]].forEach(([i, cy]) => badge(svg, x(i), cy, '空', 'rgba(85,170,70,.7)', 1));
    [[17, 509], [20, 503], [26, 503], [32, 503]].forEach(([i, cy]) => badge(svg, x(i), cy, '多', 'rgba(240,80,80,.65)', -1));

    for (const color in averages) curve(svg, color, averages[color], y);

    add(svg, 'text', { class: 'extreme', x: 627, y: 19, dy: '.36em' }, '15.30');
    arrow(svg, 714, 757, 12, '#000', 14);
    add(svg, 'text', { class: 'extreme', x: 535, y: 504, dy: '.36em' }, '6.89');
    arrow(svg, 516, 472, 507, '#000', 14);
    add(svg, 'text', { class: 'pin', x: 457, y: 484, dy: '.36em', fill: RED }, 'q');
    arrow(svg, 474, 442, 511, RED, 7);

    // watchlist marker
    vline(svg, 998, 63, 249, '#3b68d8', 3, '8 7');
    add(svg, 'rect', { x: 946, y: 22, width: 105, height: 41, rx: 6, fill: '#fff', stroke: '#5f86dc', 'stroke-width': 1.5 });
    add(svg, 'text', { class: 'watch', x: 998, y: 42, dy: '.38em' }, '加自选');

    vline(svg, 998, 281, 321, '#5b6580', 3, '8 4');
    add(svg, 'circle', { cx: 998, cy: 323, r: 4, fill: '#777' });
    flag(svg, 998, 249, 'B', 'rgba(125,125,125,.85)');
    add(svg, 'path', { d: 'M1040 264L1043 305', stroke: '#4a90e2', 'stroke-width': 1.5 });
    add(svg, 'circle', { cx: 1043, cy: 305, r: 5, fill: '#7db0f0' });
    flag(svg, 1040, 232, 'S', '#78aef0');
    [[1028, 'B', 'rgba(235,60,60,.75)'], [1013, 'T', 'rgba(255,130,40,.75)']].forEach(([cx, t, fill]) => {
        vline(svg, cx, 330, 375, fill, 3, '12 5');
        add(svg, 'circle', { cx, cy: 328, r: 5, fill });
        flag(svg, cx, 375, t, fill);
    });
}

function drawAxis() {
    const svg = document.getElementById('axis');
    for (let i = 13; i < 70; i++) {
        const major = [15, 33, 51, 69].includes(i);
        vline(svg, x(i), 1, major ? 15 : 9, major ? '#999' : '#c0c0c0', major ? 3 : 2);
    }
    add(svg, 'text', { class: 'date first', x: 0, y: 40, dy: '.36em' }, '2025-05-08');
    add(svg, 'text', { class: 'date faded', x: x(15), y: 40, dy: '.36em', 'text-anchor': 'middle' }, '05-29');
    add(svg, 'text', { class: 'date', x: x(33), y: 40, dy: '.36em', 'text-anchor': 'middle' }, '06-25');
    add(svg, 'text', { class: 'date', x: x(51), y: 40, dy: '.36em', 'text-anchor': 'middle' }, '07-21');
    add(svg, 'text', { class: 'date', x: 1056, y: 40, dy: '.36em', 'text-anchor': 'end' }, '08-14');
}

/* ---------- volume and amount, heights above the base line ---------- */
const volume = [7, 6, 4, 3, 5, 9, 6, 5, 6, 4, 8, 6, 4, 4, 3, 4, 4, 4, 4, 4, 5, 5, 4, 4, 4, 3, 4, 3, 3, 4, 3, 4, 4, 4, 4, 4, 4, 4, 4,
    18, 8, 88, 18, 67, 90, 133, 120, 119, 42, 122, 112, 102, 83, 79, 53, 42, 24, 28, 21, 20, 13, 14, 13, 11, 13, 13, 13, 12, 10, 42];
const volumeM5 = [0, 8, 3, 9, 6, 6, 10, 6, 15, 5, 30, 4, 38, 5, 39, 8, 40, 9, 41, 24, 42, 28, 43, 40, 44, 53, 45, 79, 46, 85, 47, 105, 48, 100, 49, 106, 50, 102, 51, 99, 52, 92, 53, 98, 54, 85, 55, 72, 56, 57, 57, 45, 58, 34, 59, 27, 60, 21, 61, 19, 62, 17, 63, 15, 64, 14, 68, 13, 69, 18];
const volumeM10 = [0, 9, 15, 6, 30, 5, 38, 5, 40, 7, 41, 14, 42, 16, 43, 22, 44, 31, 45, 43, 46, 55, 47, 66, 48, 70, 49, 80, 50, 91, 51, 92, 52, 98, 53, 100, 54, 96, 55, 87, 56, 77, 57, 69, 58, 66, 59, 57, 60, 47, 61, 38, 62, 30, 63, 25, 64, 21, 65, 18, 66, 17, 67, 15, 68, 14, 69, 16];
const amount = [5, 4, 3, 2, 4, 5, 4, 3, 4, 3, 5, 4, 3, 3, 2, 3, 3, 3, 3, 2, 4, 3, 3, 3, 2, 2, 3, 2, 2, 3, 2, 3, 3, 3, 3, 3, 3, 3, 3,
    11, 5, 66, 15, 62, 88, 143, 113, 119, 43, 128, 126, 99, 73, 66, 44, 34, 19, 22, 17, 15, 10, 11, 11, 9, 9, 10, 10, 10, 9, 33];
const amountM5 = [0, 6, 3, 6, 38, 3, 39, 5, 40, 7, 41, 19, 42, 21, 43, 33, 44, 47, 45, 75, 46, 84, 47, 105, 48, 101, 49, 109, 50, 106, 51, 103, 52, 94, 53, 98, 54, 81, 55, 63, 56, 47, 57, 37, 58, 28, 59, 22, 60, 17, 61, 16, 62, 13, 64, 11, 68, 11, 69, 14];
const amountM10 = [0, 6, 13, 5, 30, 4, 39, 4, 40, 5, 41, 12, 42, 12, 43, 17, 44, 27, 45, 42, 46, 52, 47, 63, 48, 67, 49, 78, 50, 90, 51, 94, 52, 99, 53, 100, 54, 95, 55, 85, 56, 75, 57, 66, 58, 63, 59, 51, 60, 40, 61, 32, 62, 25, 63, 19, 64, 16, 65, 13, 66, 11, 69, 13];

function drawBars(id, bars, m5, m10, color5, color10) {
    const svg = document.getElementById(id);
    hline(svg, 'grid', 97);
    bars.forEach((h, i) => {
        if (rising[i]) {
            add(svg, 'rect', { x: x(i) - 4, y: 194 - h, width: 8, height: h - 1, fill: h > 4 ? 'none' : '#ec5a5a', stroke: '#d95050', 'stroke-width': 2.5 });
        } else {
            add(svg, 'rect', { x: x(i) - 4.5, y: 194 - h, width: 9, height: h, fill: GREEN });
        }
    });
    curve(svg, color5, m5, v => 194 - v);
    curve(svg, color10, m10, v => 194 - v);
}

/* ---------- MACD ---------- */
const macd = [4, 3, 3, 3, 3, 3, 3, 3, 2, 2, 1, -1, -2, -3, -4, -3, -4, -3, -2, -1, -1, 1, 1, 1, 1, -1, -1, -1, -2, -4, -5, -4, -2, -1, 1, 1, 1, 2, 2,
    6, 17, 28, 40, 54, 67, 63, 65, 54, 53, 56, 47, 27, 4, -11, -25, -37, -43, -47, -48, -48, -47, -44, -40, -36, -33, -29, -25, -21, -18, -14];
const diff = [0, 7, 1, 8, 4, 8, 5, 9, 10, 9, 12, 7, 16, 4, 20, 5, 25, 7, 28, 3, 31, 1, 34, 3, 37, 4, 38, 6, 39, 8, 40, 15, 41, 23, 42, 35, 43, 48, 44, 64, 45, 69, 46, 78, 47, 80, 48, 85, 49, 94, 50, 94, 51, 88, 52, 79, 53, 70, 54, 58, 55, 48, 56, 39, 57, 32, 58, 25, 59, 19, 60, 14, 61, 10, 62, 7, 63, 4, 64, 2, 65, 0, 67, -2, 69, -2];
const dea = [0, 3, 2, 5, 6, 7, 10, 8, 16, 6, 22, 6, 27, 5, 31, 3, 37, 3, 39, 5, 41, 10, 42, 15, 43, 22, 44, 30, 45, 38, 46, 46, 47, 53, 48, 60, 49, 66, 50, 73, 51, 75, 53, 75, 54, 71, 56, 62, 58, 49, 60, 37, 62, 28, 64, 18, 65, 15, 66, 11, 69, 5];

function drawMacd() {
    const svg = document.getElementById('macd');
    hline(svg, 'grid', 97);
    macd.forEach((v, i) => vline(svg, x(i), 146, 146 - v, v > 0 ? RED : '#3f9a2c', 2.2));
    curve(svg, '#303030', diff, v => 146 - v);
    curve(svg, '#ee7840', dea, v => 146 - v);
}

drawKline();
drawAxis();
drawBars('volume', volume, volumeM5, volumeM10, '#303030', '#ee7840');
drawMacd();
drawBars('amount', amount, amountM5, amountM10, '#111', '#e09e14');
```
